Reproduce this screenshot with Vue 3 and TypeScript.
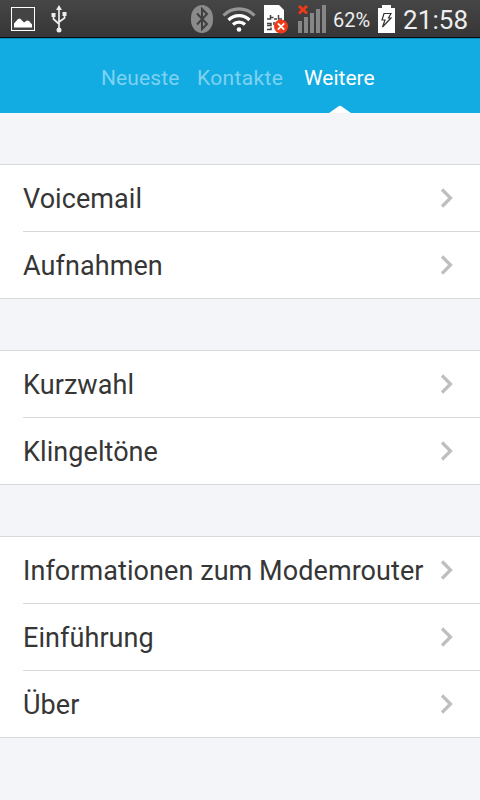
<script setup lang="ts">
interface Tab {
  label: string
  key: string
  active?: boolean
}
interface Item {
  label: string
  key: string
}

const tabs: Tab[] = [
  { label: 'Neueste', key: 'recent' },
  { label: 'Kontakte', key: 'contacts' },
  { label: 'Weitere', key: 'more', active: true },
]

const groups: Item[][] = [
  [
    { label: 'Voicemail', key: 'voicemail' },
    { label: 'Aufnahmen', key: 'recordings' },
  ],
  [
    { label: 'Kurzwahl', key: 'speed-dial' },
    { label: 'Klingeltöne', key: 'ringtones' },
  ],
  [
    { label: 'Informationen zum Modemrouter', key: 'router' },
    { label: 'Einführung', key: 'intro' },
    { label: 'Über', key: 'about' },
  ],
]
</script>

<template>
  <div class="screen">
    <div class="status">
      <svg class="picture" width="24" height="24" viewBox="0 0 24 24">
        <rect x="0.5" y="0.5" width="23" height="23" fill="#444" stroke="#fff" />
        <path d="M3 20.500v-4l4-4.500 2-.5 4 4 3-2 2 .5 3 3.500v3z" fill="#fff" />
      </svg>
      <svg class="usb" width="16" height="28" viewBox="0 0 16 28" fill="none" stroke="#eee" stroke-width="1.700">
        <path d="M8 4v20M2.500 9v5l5.500 5M13.500 9v4L8 17" />
        <path d="M8 0l3 5H5zM.5 8h4v4h-4zM11.500 7h4v4h-4z" fill="#eee" stroke="none" />
        <circle cx="8" cy="25" r="2.500" fill="#eee" stroke="none" />
      </svg>
      <svg class="bluetooth" width="22" height="28" viewBox="0 0 22 28">
        <rect width="22" height="28" rx="11" ry="13" fill="#8b8b8b" />
        <path d="M6 8.500l10 10.500-5 5V4l5 5L6 19.500" fill="none" stroke="#404040" stroke-width="2" />
      </svg>
      <svg class="wifi" width="34" height="26" viewBox="0 0 34 26" fill="none" stroke-width="3.200">
        <path d="M1.500 9.500a21.500 21.500 0 0 1 31 0" stroke="#969696" />
        <path d="M6.500 14a15 15 0 0 1 21 0M11 18.500a8.800 8.800 0 0 1 12 0" stroke="#fff" />
        <circle cx="17" cy="23.500" r="2.300" fill="#fff" />
      </svg>
      <svg class="sim" width="24" height="29" viewBox="0 0 24 29">
        <path d="M0 0h15l5 5v23H0z" fill="#fff" />
        <path d="M3 14h3.500v-4M6.500 12.500h3M10 14h3M14.500 10v4H18M3 18.500h4v2H3M3 24.500h4v-2M10 17v3" fill="none" stroke="#444" stroke-width="1.500" />
        <circle cx="17" cy="21.500" r="7" fill="#f03a17" />
        <path d="M13.800 18.300l6.400 6.400m0-6.400l-6.400 6.400" stroke="#fff" stroke-width="1.800" />
      </svg>
      <svg class="signal" width="29" height="28" viewBox="0 0 29 28">
        <path d="M0 16h4v12H0zM6 12h4v16H6zM12 8h4v20h-4zM18 4h4v24h-4zM24 0h4v28h-4z" fill="#868686" />
        <path d="M1 1l8 7.500M9 1L1 8.500" stroke="#f03a17" stroke-width="2.800" />
      </svg>
      <span class="percent">62%</span>
      <svg class="battery" width="17" height="28" viewBox="0 0 17 28">
        <path d="M4 0h9v3h4v25H0V3h4z" fill="#fff" />
        <path d="M6 8.500h7L10.500 13H13L4.500 22l2.500-7H4z" fill="none" stroke="#333" stroke-width="1.200" />
      </svg>
      <span class="clock">21:58</span>
    </div>

    <nav class="tabs">
      <div v-for="tab in tabs" :key="tab.key" :class="['tab', tab.key, { active: tab.active }]">
        <span>{{ tab.label }}</span>
        <svg v-if="tab.active" class="pointer" width="22" height="8" viewBox="0 0 22 8">
          <path d="M0 8L10 1Q11 .3 12 1L22 8z" fill="#fff" />
        </svg>
      </div>
    </nav>

    <main class="content">
      <section v-for="(group, i) in groups" :key="i" class="group">
        <div v-for="item in group" :key="item.key" class="row">
          <span :class="['label', item.key]">{{ item.label }}</span>
          <svg class="chevron" width="14" height="20" viewBox="0 0 14 20">
            <path d="M2 1.500L10.500 10 2 18.500" fill="none" stroke="#bfbfbf" stroke-width="3.300" />
          </svg>
        </div>
      </section>
    </main>
  </div>
</template>

<style>
body {
  margin: 0;
}
</style>

<style scoped>
.screen {
  width: 480px;
  height: 800px;
  overflow: hidden;
  background: #f3f5f9;
  font-family: Roboto, 'Liberation Sans', sans-serif;
}
.status {
  box-sizing: border-box;
  height: 38px;
  display: flex;
  align-items: flex-start;
  padding-left: 11px;
  background: linear-gradient(#464646, #363636);
  border-bottom: 1px solid #050b0e;
  color: #eee;
  white-space: nowrap;
}
.status svg {
  flex: none;
}
.picture { margin-top: 7px; }
.usb { margin: 5px 0 0 16px; }
.bluetooth { margin: 5px 0 0 124px; }
.wifi { margin: 6px 0 0 9px; }
.sim { margin: 5px 0 0 8px; }
.signal { margin: 5px 0 0 10px; }
.percent {
  width: 45px;
  margin-left: 6px;
  font-size: 20px;
  line-height: 40px;
}
.battery { margin-top: 5px; }
.clock {
  margin-left: 8px;
  font-size: 26px;
  line-height: 40px;
  letter-spacing: 0.1px;
}
.tabs {
  box-sizing: border-box;
  height: 75px;
  display: flex;
  padding-left: 101px;
  background: #12abe2;
  border-top: 1px solid #078dbb;
  font-size: 21px;
  line-height: 79px;
  color: #7dd2f0;
  white-space: nowrap;
}
.tab {
  position: relative;
}
.recent {
  width: 96px;
  letter-spacing: 0.1px;
}
.contacts {
  width: 107px;
  letter-spacing: 0.35px;
}
.more { width: 72px; }
.tab.active {
  color: #fff;
}
.pointer {
  position: absolute;
  left: 25px;
  bottom: 0;
}
.content {
  display: flex;
  flex-direction: column;
  gap: 51px;
  padding-top: 51px;
}
.group {
  background: #fff;
  border-top: 1px solid #d8d9db;
  border-bottom: 1px solid #d8d9db;
}
.row {
  height: 66px;
  margin-left: 23px;
  padding-right: 26px;
  display: flex;
  align-items: center;
  justify-content: space-between;
}
.row + .row {
  border-top: 1px solid #d8d8d8;
}
.label {
  font-size: 27px;
  line-height: 66px;
  padding-top: 2px;
  color: #363636;
  letter-spacing: 0.07px;
  white-space: nowrap;
}
</style>
